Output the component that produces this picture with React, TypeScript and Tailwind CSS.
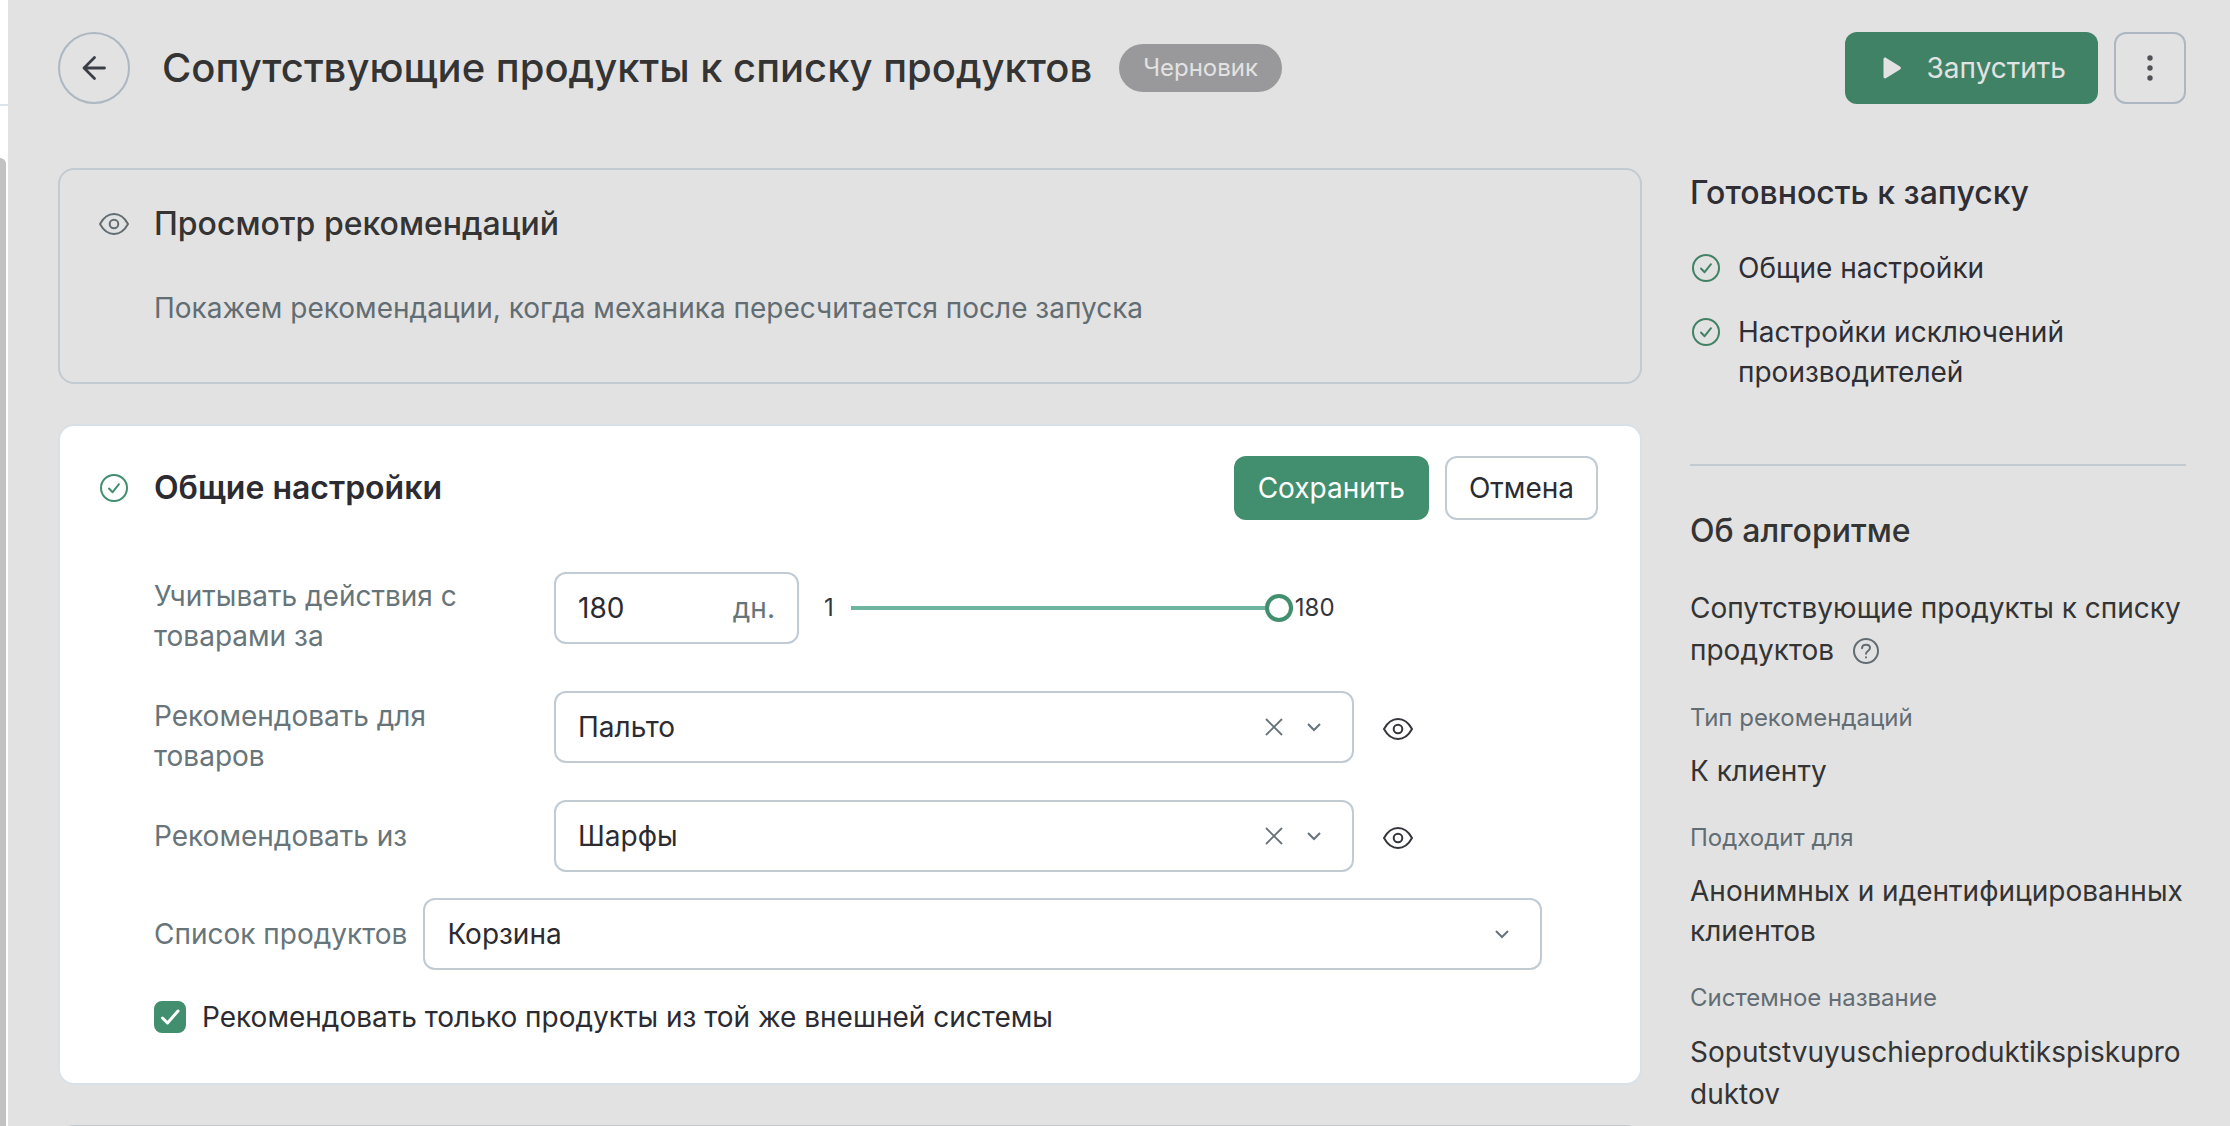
import { useState } from "react";
import type { ReactNode } from "react";

function EyeIcon({ className = "" }: { className?: string }) {
  return (
    <svg className={className} width="32" height="32" viewBox="0 0 32 32" fill="none" stroke="currentColor" strokeWidth="2" strokeLinejoin="round" aria-hidden="true">
      <path d="M2 16C5.500 9.500 10.300 6 16 6s10.500 3.500 14 10c-3.500 6.500-8.300 10-14 10S5.500 22.500 2 16Z" />
      <circle cx="16" cy="16" r="4.300" />
    </svg>
  );
}

function CheckCircleIcon({ className = "" }: { className?: string }) {
  return (
    <svg className={className} width="32" height="32" viewBox="0 0 32 32" fill="none" stroke="currentColor" strokeWidth="2" strokeLinecap="round" strokeLinejoin="round" aria-hidden="true">
      <circle cx="16" cy="16" r="13" />
      <path d="m11 16.500 3.600 3.700 6.400-8" />
    </svg>
  );
}

function HelpIcon() {
  return (
    <svg width="28" height="28" viewBox="0 0 28 28" fill="none" stroke="currentColor" strokeWidth="2" strokeLinecap="round" aria-hidden="true">
      <circle cx="14" cy="13" r="12" />
      <path d="M10 10.200C10.200 8 11.800 6.800 14 6.800s4 1.300 4 3.300c0 2.800-4 2.900-4 5.700" />
      <path d="M14 19.200v.2" />
    </svg>
  );
}

function ChevronIcon() {
  return (
    <svg width="16" height="16" viewBox="0 0 16 16" fill="none" stroke="currentColor" strokeWidth="2" aria-hidden="true">
      <path d="m2 5 6 6 6-6" />
    </svg>
  );
}

type SelectFieldProps = { id: string; value: string; clearable?: boolean; className: string };

function SelectField({ id, value, clearable, className }: SelectFieldProps) {
  return (
    <div className={`relative ${className}`}>
      <select id={id} defaultValue={value} className="block h-[72px] w-full appearance-none rounded-xl border-2 border-[#c0cbd4] bg-white px-[22px] text-[28px] text-[#2b2b31]">
        <option>{value}</option>
      </select>
      <div className="pointer-events-none absolute inset-y-0 right-8 flex items-center gap-5 text-[#67737a]">
        {clearable && (
          <button type="button" aria-label="Очистить" className="pointer-events-auto">
            <svg width="24" height="24" viewBox="0 0 24 24" stroke="currentColor" strokeWidth="1.800" aria-hidden="true">
              <path d="m4 4 16 16M20 4 4 20" />
            </svg>
          </button>
        )}
        <ChevronIcon />
      </div>
    </div>
  );
}

function Label({ htmlFor, children }: { htmlFor: string; children: ReactNode }) {
  return (
    <label htmlFor={htmlFor} className="w-[400px] shrink-0 pr-20 text-[28px] leading-10 text-[#67757a]">
      {children}
    </label>
  );
}

function PreviewButton() {
  return (
    <button type="button" aria-label="Посмотреть" className="mt-0.5 ml-7 flex h-[72px] items-center text-[#35363c]">
      <EyeIcon />
    </button>
  );
}

function ReadyItem({ children }: { children: ReactNode }) {
  return (
    <li className="flex gap-4">
      <CheckCircleIcon className="mt-1 shrink-0 text-[#408266]" />
      <span className="text-[28px] leading-10 text-[#2e2e34]">{children}</span>
    </li>
  );
}

function Fact({ title, children }: { title: string; children: ReactNode }) {
  return (
    <div className="mt-[29px]">
      <dt className="text-2xl leading-9 text-[#626d73]">{title}</dt>
      <dd className="mt-[15px] text-[28px] leading-10 wrap-break-word">{children}</dd>
    </div>
  );
}

export default function App() {
  const [days, setDays] = useState(180);
  const [sameSystem, setSameSystem] = useState(true);

  return (
    <div className="flex h-screen overflow-hidden bg-[#e2e2e2] font-['Inter',sans-serif] text-[#343434]">
      <div className="flex w-2 shrink-0 flex-col bg-white">
        <div className="h-[106px] shrink-0 border-b-2 border-[#dde4e9]" />
        <div className="mt-[52px] mr-0.5 grow rounded-tr-md bg-[#c2c2c2]" />
      </div>

      <div className="min-w-0 grow pt-8 pr-11 pl-[50px]">
        <header className="flex items-center">
          <button type="button" aria-label="Назад" className="flex size-[72px] shrink-0 items-center justify-center rounded-full border-2 border-[#acb7c1]">
            <svg width="28" height="28" viewBox="0 0 28 28" fill="none" stroke="#3b3e46" strokeWidth="2.800" strokeLinecap="round" strokeLinejoin="round" aria-hidden="true">
              <path d="M24.500 14H4M14.500 3.500 4 14l10.500 10.500" />
            </svg>
          </button>
          <h1 className="ml-8 text-[40px] leading-12 font-medium">Сопутствующие продукты к списку продуктов</h1>
          <span className="ml-[27px] rounded-full bg-[#99999b] px-6 text-2xl leading-12 text-[#e2e2e2]">Черновик</span>
          <button type="button" className="ml-auto flex h-[72px] items-center gap-6 rounded-xl bg-[#408266] pr-8 pl-9 text-[28px] text-[#e2e2e2]">
            <svg width="22" height="22" viewBox="0 0 22 22" fill="currentColor" aria-hidden="true">
              <path d="M2.500 2.300c0-1.500 1.400-2.200 2.700-1.400l13.800 8.700c1.200.7 1.200 2.100 0 2.800l-13.800 8.700c-1.300.8-2.700.1-2.700-1.400Z" />
            </svg>
            Запустить
          </button>
          <button type="button" aria-label="Ещё" className="ml-4 flex size-[72px] items-center justify-center rounded-xl border-2 border-[#acb7c1]">
            <svg width="28" height="28" viewBox="0 0 28 28" fill="#505256" aria-hidden="true">
              <circle cx="14" cy="4" r="2.700" />
              <circle cx="14" cy="14" r="2.700" />
              <circle cx="14" cy="24" r="2.700" />
            </svg>
          </button>
        </header>

        <div className="mt-16 flex items-start gap-12">
          <main className="flex min-w-0 grow flex-col gap-10">
            <section className="rounded-2xl border-2 border-[#c3cad0] px-[38px] pt-8 pb-[54px]">
              <div className="flex items-center gap-6">
                <EyeIcon className="text-[#626d73]" />
                <h2 className="text-[32px] leading-11 font-medium">Просмотр рекомендаций</h2>
              </div>
              <p className="mt-[42px] pl-14 text-[28px] leading-10 text-[#626d73]">
                Покажем рекомендации, когда механика пересчитается после запуска
              </p>
            </section>

            <section className="rounded-2xl border-2 border-[#dae1e6] bg-white pt-[30px] pr-[42px] pb-[46px] pl-[38px] text-[#2b2b31]">
              <div className="flex items-center">
                <CheckCircleIcon className="text-[#418f6e]" />
                <h2 className="ml-6 text-[32px] leading-11 font-semibold">Общие настройки</h2>
                <button type="button" className="ml-auto h-16 rounded-xl bg-[#418f6e] px-6 text-[28px] text-white">Сохранить</button>
                <button type="button" className="ml-4 h-16 rounded-xl border-2 border-[#c0cbd4] px-[22px] text-[28px]">Отмена</button>
              </div>

              <form className="mt-[52px] pr-14 pl-14">
                <div className="flex items-end">
                  <Label htmlFor="days">Учитывать действия с товарами за</Label>
                  <div className="mb-3 flex items-center">
                    <div className="flex h-[72px] w-[245px] items-center rounded-xl border-2 border-[#c0cbd4] px-[22px] text-[28px]">
                      <input
                        id="days"
                        type="text"
                        inputMode="numeric"
                        value={days}
                        onChange={(e) => setDays(Number(e.target.value) || 1)}
                        className="w-0 grow bg-transparent outline-none"
                      />
                      <span className="text-[#67757a]">дн.</span>
                    </div>
                    <span className="ml-[25px] text-2xl text-[#35363c]">1</span>
                    <input
                      type="range"
                      aria-label="Количество дней"
                      min={1}
                      max={180}
                      value={days}
                      onChange={(e) => setDays(Number(e.target.value))}
                      className="ml-[17px] h-7 w-[442px] appearance-none bg-transparent [&::-webkit-slider-runnable-track]:h-1 [&::-webkit-slider-runnable-track]:bg-[#70b59f] [&::-webkit-slider-thumb]:-mt-3 [&::-webkit-slider-thumb]:size-7 [&::-webkit-slider-thumb]:appearance-none [&::-webkit-slider-thumb]:rounded-full [&::-webkit-slider-thumb]:border-4 [&::-webkit-slider-thumb]:border-solid [&::-webkit-slider-thumb]:border-[#418f6e] [&::-webkit-slider-thumb]:bg-white"
                    />
                    <span className="ml-0.5 text-2xl text-[#35363c]">180</span>
                  </div>
                </div>

                <div className="mt-[35px] flex items-start">
                  <div className="flex pt-[5px]">
                    <Label htmlFor="target">Рекомендовать для товаров</Label>
                  </div>
                  <SelectField id="target" value="Пальто" clearable className="w-[800px]" />
                  <PreviewButton />
                </div>

                <div className="mt-6 flex items-start">
                  <div className="flex pt-4">
                    <Label htmlFor="source">Рекомендовать из</Label>
                  </div>
                  <SelectField id="source" value="Шарфы" clearable className="w-[800px]" />
                  <PreviewButton />
                </div>

                <div className="mt-6 flex items-center gap-4">
                  <label htmlFor="list" className="shrink-0 text-[28px] leading-10 text-[#67757a]">Список продуктов</label>
                  <SelectField id="list" value="Корзина" className="grow" />
                </div>

                <label className="mt-[27px] flex items-center gap-4 text-[28px] leading-10">
                  <span className="relative size-8 shrink-0">
                    <input
                      type="checkbox"
                      checked={sameSystem}
                      onChange={(e) => setSameSystem(e.target.checked)}
                      className="peer block size-8 appearance-none rounded-lg border-2 border-[#c0cbd4] checked:border-[#418f6e] checked:bg-[#418f6e]"
                    />
                    <svg className="pointer-events-none absolute inset-0 hidden peer-checked:block" width="32" height="32" viewBox="0 0 32 32" fill="none" stroke="#fff" strokeWidth="3" strokeLinecap="round" strokeLinejoin="round" aria-hidden="true">
                      <path d="m8.500 17 5 5L24 10" />
                    </svg>
                  </span>
                  Рекомендовать только продукты из той же внешней системы
                </label>
              </form>
            </section>

            <section className="h-40 rounded-2xl border-2 border-[#c3cad0]" />
          </main>

          <aside className="w-[496px] shrink-0">
            <h2 className="text-[32px] leading-[50px] font-medium text-[#2e2e34]">Готовность к запуску</h2>
            <ul className="mt-[30px] flex flex-col gap-6">
              <ReadyItem>Общие настройки</ReadyItem>
              <ReadyItem>Настройки исключений производителей</ReadyItem>
            </ul>
            <hr className="mt-[72px] border-t-2 border-[#c3cad0]" />
            <h2 className="mt-10 text-[32px] leading-[50px] font-medium">Об алгоритме</h2>
            <p className="mt-[31px] text-[28px] leading-[42px]">
              Сопутствующие продукты к списку продуктов
              <button type="button" aria-label="Справка" className="ml-[18px] align-middle text-[#626d73]">
                <HelpIcon />
              </button>
            </p>
            <dl>
              <Fact title="Тип рекомендаций">К клиенту</Fact>
              <Fact title="Подходит для">Анонимных и идентифицированных клиентов</Fact>
              <Fact title="Системное название">
                <span className="leading-[42px]">Soputstvuyuschieproduktikspiskuproduktov</span>
              </Fact>
            </dl>
          </aside>
        </div>
      </div>
    </div>
  );
}
